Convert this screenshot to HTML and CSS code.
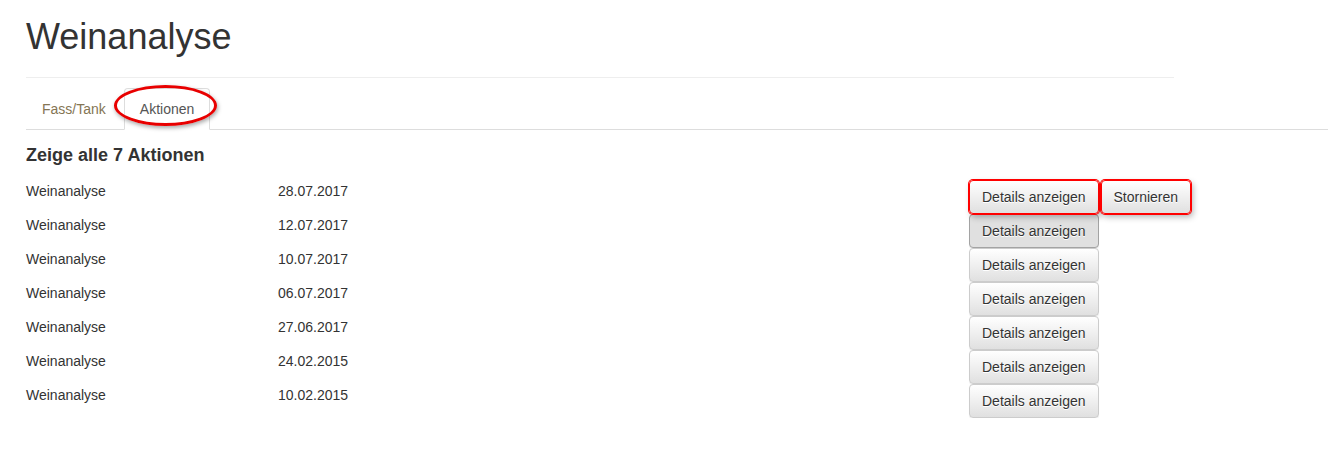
FILE: index.html
```html
<!DOCTYPE html>
<html lang="de">
<head>
    <meta charset="UTF-8">
    <meta name="viewport" content="width=device-width, initial-scale=1.0">
    <title>Weinanalyse</title>
    <link rel="stylesheet" href="styles.css">
</head>
<body>
<div class="page">
    <div class="page-header">
        <h1>Weinanalyse</h1>
    </div>

    <ul class="tabs">
        <li><a href="#">Fass/Tank</a></li>
        <li class="active"><a href="#">Aktionen</a><span class="mark-ellipse"></span></li>
    </ul>

    <h3>Zeige alle 7 Aktionen</h3>

    <div class="actions">
        <div class="row">
            <div class="name">Weinanalyse</div>
            <div class="date">28.07.2017</div>
            <div class="btns">
                <button class="btn hl">Details anzeigen</button>
                <button class="btn hl">Stornieren</button>
            </div>
        </div>
        <div class="row">
            <div class="name">Weinanalyse</div>
            <div class="date">12.07.2017</div>
            <div class="btns"><button class="btn pressed">Details anzeigen</button></div>
        </div>
        <div class="row">
            <div class="name">Weinanalyse</div>
            <div class="date">10.07.2017</div>
            <div class="btns"><button class="btn">Details anzeigen</button></div>
        </div>
        <div class="row">
            <div class="name">Weinanalyse</div>
            <div class="date">06.07.2017</div>
            <div class="btns"><button class="btn">Details anzeigen</button></div>
        </div>
        <div class="row">
            <div class="name">Weinanalyse</div>
            <div class="date">27.06.2017</div>
            <div class="btns"><button class="btn">Details anzeigen</button></div>
        </div>
        <div class="row">
            <div class="name">Weinanalyse</div>
            <div class="date">24.02.2015</div>
            <div class="btns"><button class="btn">Details anzeigen</button></div>
        </div>
        <div class="row">
            <div class="name">Weinanalyse</div>
            <div class="date">10.02.2015</div>
            <div class="btns"><button class="btn">Details anzeigen</button></div>
        </div>
    </div>
</div>
</body>
</html>
```

FILE: styles.css
```css
body {
    margin: 0;
    font-family: "Liberation Sans", Arial, sans-serif;
    font-size: 14px;
    line-height: 20px;
    color: #333;
    background: #fff;
}
.page {
    padding-left: 26px;
}
.page-header {
    width: 1148px;
    border-bottom: 1px solid #eee;
}
h1 {
    margin: 17px 0 20px;
    font-size: 36px;
    font-weight: normal;
    line-height: 40px;
}
.tabs {
    list-style: none;
    margin: 10px 0 0;
    padding: 0;
    display: flex;
    border-bottom: 1px solid #ddd;
}
.tabs li {
    position: relative;
    margin-right: 2px;
    margin-bottom: -1px;
}
.tabs a {
    display: block;
    padding: 10px 15px;
    line-height: 20px;
    border: 1px solid transparent;
    border-radius: 4px 4px 0 0;
    color: #857554;
    text-decoration: none;
}
.tabs li.active a {
    color: #555;
    background: #fff;
    border-color: #ddd #ddd transparent;
}
.mark-ellipse {
    position: absolute;
    left: -10px;
    top: -3px;
    width: 97px;
    height: 35px;
    border: 3px solid #e80000;
    border-radius: 50%;
    box-shadow: 1px 2px 4px rgba(0, 0, 0, 0.35);
}
h3 {
    margin: 15px 0 15px;
    font-size: 18px;
    font-weight: bold;
    line-height: 20px;
}
.row {
    display: grid;
    grid-template-columns: 252px 691px auto;
    height: 34px;
}
.name,
.date {
    padding-top: 1px;
}
.btns {
    display: flex;
    gap: 2px;
    align-items: flex-start;
}
.btn {
    font-family: inherit;
    font-size: 14px;
    line-height: 20px;
    color: #333;
    padding: 6px 12px;
    border: 1px solid #ccc;
    border-radius: 4px;
    background: linear-gradient(to bottom, #fff 0%, #e0e0e0 100%);
    text-shadow: 0 1px 0 #fff;
    box-shadow: inset 0 1px 0 rgba(255, 255, 255, 0.15), 0 1px 1px rgba(0, 0, 0, 0.075);
    cursor: pointer;
}
.btn.pressed {
    background: #e0e0e0;
    border-color: #a3a3a3;
}
.btn.hl {
    border-color: #f00;
    box-shadow: 0 0 0 1px #f00, 2px 3px 6px rgba(0, 0, 0, 0.3);
    position: relative;
}
```
